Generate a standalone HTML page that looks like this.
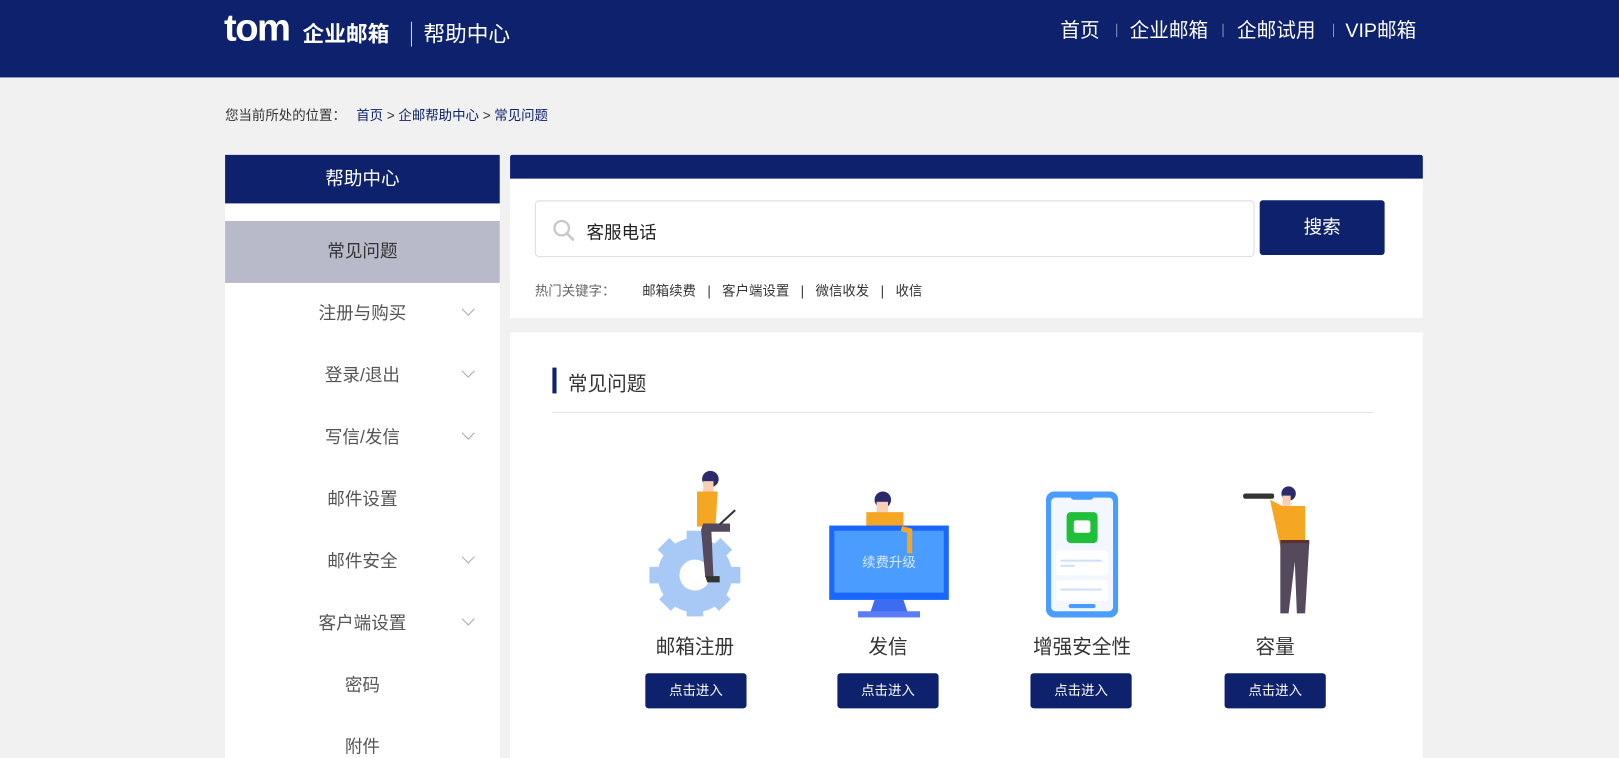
<!DOCTYPE html>
<html><head><meta charset="utf-8"><style>
*{margin:0;padding:0;box-sizing:border-box}
html,body{width:1619px;height:758px;overflow:hidden;background:#f1f1f1}
body{font-family:"Liberation Sans","Noto Sans CJK SC",sans-serif;color:#333;position:relative}
#w{position:absolute;left:0;top:0;width:1568px;height:734px;transform:scale(1.03253);transform-origin:0 0}
.a{position:absolute}
.hdr{left:0;top:0;width:1568px;height:75px;background:#0e216c}
.nav{color:#fff;font-size:19px;top:15px}
.sep{background:#8a93c0;width:1px;height:13px;top:23px}
.side{left:218px;top:150px;width:266px;height:608px;background:#fff}
.st{left:0;top:0;width:266px;height:47px;background:#0e216c;color:#fff;font-size:18px;text-align:center;line-height:47px}
.it{left:0;width:266px;height:60px;line-height:60px;text-align:center;font-size:17px;color:#555}
.chev{width:9px;height:9px;border-right:1.5px solid #aaa;border-bottom:1.5px solid #aaa;transform:rotate(45deg);left:231px;top:21px}
.btn{width:98px;height:34px;background:#0e216c;color:#fff;font-size:13px;text-align:center;line-height:34px;border-radius:3px;top:652px}
.lbl{font-size:19px;color:#333;top:612px;width:200px;text-align:center}
.k{color:#333}.s{margin:0 11px;color:#333}
</style></head><body><div id="w">
<div class="a hdr"></div>
<div class="a" style="left:217px;top:6px;color:#fff;font-size:37px;font-weight:bold;letter-spacing:-1.5px">tom</div>
<div class="a" style="left:293px;top:17px;color:#fff;font-size:21px;font-weight:bold">企业邮箱</div>
<div class="a" style="left:398px;top:21px;width:1px;height:24px;background:#cfd3e6"></div>
<div class="a" style="left:410px;top:17px;color:#fff;font-size:21px">帮助中心</div>
<div class="a nav" style="left:1027px">首页</div>
<div class="a sep" style="left:1081px"></div>
<div class="a nav" style="left:1094px">企业邮箱</div>
<div class="a sep" style="left:1184px"></div>
<div class="a nav" style="left:1198px">企邮试用</div>
<div class="a sep" style="left:1291px"></div>
<div class="a nav" style="left:1303px">VIP邮箱</div>
<div class="a" style="left:218px;top:101px;font-size:13px;color:#333">您当前所处的位置：<span style="margin-left:10px;color:#0e216c">首页</span> &gt; <span style="color:#0e216c">企邮帮助中心</span> &gt; <span style="color:#0e216c">常见问题</span></div>

<div class="a side">
<div class="a st">帮助中心</div>
<div class="a it" style="top:64px;background:#b8b9c9;color:#333">常见问题</div>
<div class="a it" style="top:124px">注册与购买<div class="a chev"></div></div>
<div class="a it" style="top:184px">登录/退出<div class="a chev"></div></div>
<div class="a it" style="top:244px">写信/发信<div class="a chev"></div></div>
<div class="a it" style="top:304px">邮件设置</div>
<div class="a it" style="top:364px">邮件安全<div class="a chev"></div></div>
<div class="a it" style="top:424px">客户端设置<div class="a chev"></div></div>
<div class="a it" style="top:484px">密码</div>
<div class="a it" style="top:544px">附件</div>
</div>

<div class="a" style="left:494px;top:150px;width:884px;height:158px;background:#fff"></div>
<div class="a" style="left:494px;top:150px;width:884px;height:23px;background:#0e216c;border-radius:2px 2px 0 0"></div>
<div class="a" style="left:518px;top:194px;width:697px;height:55px;border:1px solid #ddd;border-radius:4px;background:#fff"></div>
<svg class="a" style="left:535px;top:212px" width="24" height="22" viewBox="0 0 24 22"><circle cx="9" cy="9" r="7" fill="none" stroke="#c8c8c8" stroke-width="2.2"/><path d="M14 14l6 6" stroke="#c8c8c8" stroke-width="2.6" stroke-linecap="round"/></svg>
<div class="a" style="left:568px;top:211px;font-size:17px;color:#222">客服电话</div>
<div class="a" style="left:1220px;top:194px;width:121px;height:53px;background:#0e216c;border-radius:3px;color:#fff;font-size:18px;text-align:center;line-height:53px">搜索</div>
<div class="a" style="left:518px;top:271px;font-size:13px;color:#666">热门关键字：<span class="k" style="margin-left:26px">邮箱续费</span><span class="s">|</span><span class="k">客户端设置</span><span class="s">|</span><span class="k">微信收发</span><span class="s">|</span><span class="k">收信</span></div>

<div class="a" style="left:494px;top:322px;width:884px;height:436px;background:#fff"></div>
<div class="a" style="left:535px;top:356px;width:4px;height:25px;background:#0e216c"></div>
<div class="a" style="left:550px;top:357px;font-size:19px;color:#333">常见问题</div>
<div class="a" style="left:535px;top:399px;width:795px;height:1px;background:#e4e4e4"></div>

<svg class="a" style="left:625px;top:452px" width="100" height="145" viewBox="0 0 100 145">
<g fill="#a8c9f5"><circle cx="48" cy="105" r="36"/><rect x="40" y="62" width="16" height="84"/><rect x="4" y="97" width="88" height="16"/><rect x="40" y="62" width="16" height="84" transform="rotate(45 48 105)"/><rect x="40" y="62" width="16" height="84" transform="rotate(-45 48 105)"/></g>
<circle cx="48" cy="105" r="15" fill="#fff"/>
<circle cx="63" cy="12" r="8" fill="#2c2a6b"/><rect x="56" y="14" width="10" height="12" fill="#f9d0b5"/>
<path d="M50 24h20l-2 34H50z" fill="#f5a623"/><path d="M56 55h26v8H64l2 44h-8l-4-46z" fill="#55495e"/>
<path d="M58 106h14v6H60z" fill="#333"/><path d="M72 56l15-14" stroke="#333" stroke-width="2"/>
</svg>
<div class="a lbl" style="left:573px">邮箱注册</div>
<div class="a btn" style="left:625px">点击进入</div>

<svg class="a" style="left:803px;top:472px" width="116" height="126" viewBox="0 0 116 126">
<circle cx="52" cy="12" r="8" fill="#2c2a6b"/><rect x="46" y="14" width="11" height="10" fill="#f9d0b5"/>
<path d="M36 24h36v14H36z" fill="#f5a623"/>
<rect x="0" y="37" width="116" height="72" fill="#1a66ff"/><rect x="5" y="42" width="106" height="60" fill="#4b9cff"/>
<text x="58" y="77" text-anchor="middle" fill="#dbe9ff" font-size="13" font-family="Noto Sans CJK SC,sans-serif">续费升级</text>
<path d="M70 40l8 2 0 22" stroke="#f5a623" stroke-width="5" fill="none"/>
<path d="M44 109h28l4 12H40z" fill="#3d6cf0"/><rect x="28" y="120" width="60" height="6" fill="#5a7df5"/>
</svg>
<div class="a lbl" style="left:760px">发信</div>
<div class="a btn" style="left:811px">点击进入</div>

<svg class="a" style="left:1013px;top:476px" width="70" height="122" viewBox="0 0 70 122">
<rect x="0" y="0" width="70" height="122" rx="8" fill="#4a9cff"/><rect x="5" y="6" width="60" height="110" rx="4" fill="#f3f7ff"/>
<rect x="24" y="0" width="22" height="8" rx="3" fill="#4a9cff"/>
<rect x="20" y="20" width="30" height="30" rx="4" fill="#1fbf3a"/><rect x="27" y="28" width="16" height="12" rx="2" fill="#fff"/>
<rect x="10" y="57" width="50" height="24" rx="3" fill="#fff"/><rect x="14" y="66" width="40" height="2" fill="#cfe0ff"/><rect x="14" y="71" width="14" height="2" fill="#cfe0ff"/>
<rect x="10" y="86" width="50" height="20" rx="3" fill="#fff"/><rect x="14" y="94" width="40" height="2" fill="#cfe0ff"/>
<rect x="22" y="109" width="26" height="4" rx="2" fill="#4a9cff"/>
</svg>
<div class="a lbl" style="left:948px">增强安全性</div>
<div class="a btn" style="left:998px">点击进入</div>

<svg class="a" style="left:1200px;top:468px" width="72" height="130" viewBox="0 0 72 130">
<rect x="4" y="10" width="30" height="5" rx="2" fill="#333"/>
<circle cx="48" cy="10" r="7" fill="#2c2a6b"/><rect x="42" y="12" width="8" height="10" fill="#f9d0b5"/>
<path d="M30 16l12 6h22v40H40z" fill="#f5a623"/><rect x="40" y="55" width="28" height="4" fill="#5a3030"/>
<path d="M40 58h28l-4 68h-8l-2-50-6 50h-8z" fill="#55495e"/>
</svg>
<div class="a lbl" style="left:1135px">容量</div>
<div class="a btn" style="left:1186px">点击进入</div>
</div></body></html>
